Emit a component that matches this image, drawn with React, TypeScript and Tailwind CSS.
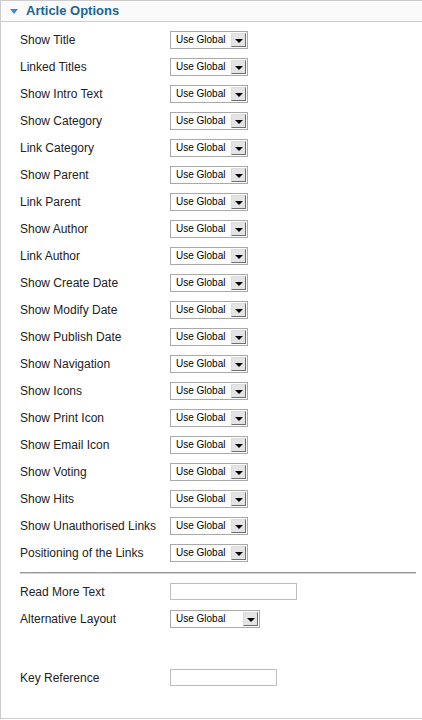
import React from "react";

const labels = [
  "Show Title",
  "Linked Titles",
  "Show Intro Text",
  "Show Category",
  "Link Category",
  "Show Parent",
  "Link Parent",
  "Show Author",
  "Link Author",
  "Show Create Date",
  "Show Modify Date",
  "Show Publish Date",
  "Show Navigation",
  "Show Icons",
  "Show Print Icon",
  "Show Email Icon",
  "Show Voting",
  "Show Hits",
  "Show Unauthorised Links",
  "Positioning of the Links",
];

function Select({ wide }: { wide?: boolean }) {
  return (
    <div
      className={`flex h-[18px] items-center border border-[#a9a9a9] bg-white ${
        wide ? "w-[90px]" : "w-[78px]"
      }`}
    >
      <span className="flex-1 pl-[5px] text-[10px] leading-none text-black">Use Global</span>
      <div className="mr-[1px] flex h-[14px] w-[15px] items-end justify-center border border-t-[#dcdcdc] border-l-[#dcdcdc] border-r-[#6e6e6e] border-b-[#6e6e6e] bg-[#e4e4e4] pb-[3px]">
        <div className="h-0 w-0 border-l-[4px] border-r-[4px] border-t-[4px] border-l-transparent border-r-transparent border-t-black" />
      </div>
    </div>
  );
}

function Row({ label, children }: { label: string; children: React.ReactNode }) {
  return (
    <div className="flex h-[27px] items-center">
      <div className="w-[150px] text-[12px] text-[#222]">{label}</div>
      {children}
    </div>
  );
}

export default function App() {
  return (
    <div
      className="h-[719px] w-[422px] border-t border-l border-b border-[#cccccc] bg-white"
      style={{ fontFamily: '"Liberation Sans", Arial, sans-serif' }}
    >
      <div className="flex h-[21px] items-center border-b border-[#cccccc] bg-[#fafafa] pl-[9px]">
        <div className="mr-[8px] mt-[1px] h-0 w-0 border-l-[4px] border-r-[4px] border-t-[5px] border-l-transparent border-r-transparent border-t-[#3b8cc9]" />
        <span className="text-[13px] font-bold text-[#1b6597]">Article Options</span>
      </div>
      <div className="pl-[19px] pr-[6px] pt-[4px]">
        {labels.map((l) => (
          <Row key={l} label={l}>
            <Select />
          </Row>
        ))}
        <div className="mt-[6px] h-[2px] border-t border-b border-t-[#9a9a9a] border-b-[#d0d0d0]" />
        <div className="mt-[4px]">
          <Row label="Read More Text">
            <div className="h-[17px] w-[127px] border border-[#bdbdbd] bg-white" />
          </Row>
          <Row label="Alternative Layout">
            <Select wide />
          </Row>
        </div>
        <div className="mt-[32px]">
          <Row label="Key Reference">
            <div className="h-[17px] w-[107px] border border-[#bdbdbd] bg-white" />
          </Row>
        </div>
      </div>
    </div>
  );
}
